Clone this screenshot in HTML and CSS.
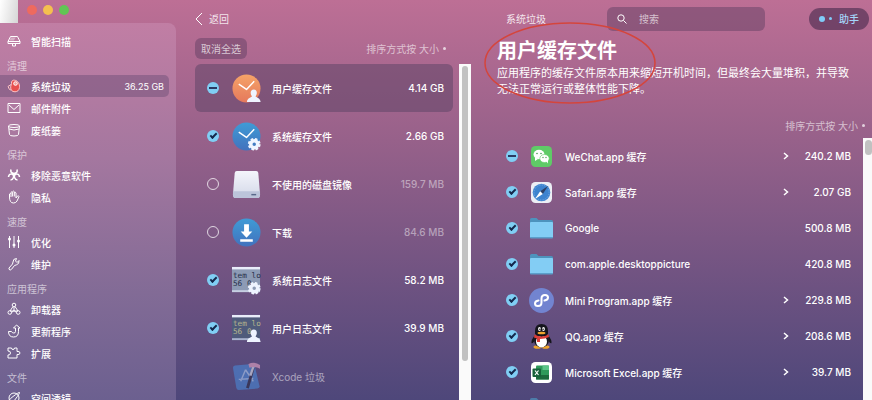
FILE: index.html
```html
<!DOCTYPE html>
<html lang="zh-CN">
<head>
  <meta charset="UTF-8">
  <title>系统垃圾</title>
  <link rel="stylesheet" href="styles.css">
</head>
<body>
  <!-- shared shapes -->
  <svg width="0" height="0" class="defs">
    <defs>
      <linearGradient id="orange" x1="0" y1="0" x2="0" y2="1"><stop offset="0" stop-color="#f5a468"/><stop offset="1" stop-color="#e5785c"/></linearGradient>
      <linearGradient id="blue" x1="0" y1="0" x2="0" y2="1"><stop offset="0" stop-color="#3f9bd6"/><stop offset="1" stop-color="#4272bd"/></linearGradient>
      <linearGradient id="disk" x1="0" y1="0" x2="0" y2="1"><stop offset="0" stop-color="#f4f5fb"/><stop offset="1" stop-color="#d3d8e8"/></linearGradient>
      <g id="person"><path d="M22.500 16c2 0 3.200 1.500 3.200 3.500 0 1.500-.6 2.600-1.300 3.500.2 1.400 4.800 1.200 5.200 6H15.400c.4-4.800 5-4.600 5.200-6-.7-.9-1.300-2-1.300-3.500 0-2 1.200-3.500 3.200-3.500z" fill="#eef4ff"/></g>
      <g id="gear"><circle cx="23" cy="23" r="3.600" fill="none" stroke="#eef4ff" stroke-width="3.600"/><circle cx="23" cy="23" r="5.500" fill="none" stroke="#eef4ff" stroke-width="2.200" stroke-dasharray="2.600 1.720"/></g>
      <g id="folder"><path d="M1 3.500Q1 2 2.500 2h5l2 2h13Q24 4 24 5.500V12H1z" fill="#4d93bd"/><rect x="1" y="6" width="23" height="16" rx="1" fill="#83cdf4"/><path d="M1 21h23v.5q0 1-1 1H2q-1 0-1-1z" fill="#5a9fcb"/></g>
    </defs>
  </svg>

  <div class="window">
    <aside class="sidebar">
      <div class="titlebar">
        <div class="lights">
          <span class="light red"></span>
          <span class="light yellow"></span>
          <span class="light green"></span>
        </div>
      </div>
      <nav class="menu">
        <a href="#" class="menu-item">
          <svg class="menu-icon" viewBox="0 0 14 14"><path d="M3.500 2.500h7l2.500 5v2H1v-2zM1 7.500h12M5.500 9.500v2.500h3V9.500" /><path d="M3.800 3.500h5l-2 3H2.500z" fill="#ffffff66" stroke="none"/></svg>
          <span>智能扫描</span>
        </a>
        <h2>清理</h2>
        <a href="#" class="menu-item active">
          <svg class="menu-icon" viewBox="0 0 14 14"><path d="M4.500 4.500C4 2 6 .8 7.500 1.200 11 1.500 12.800 5 12.500 8.500c-.2 2.600-2 4.300-4.500 4.300-3 0-4.500-1.800-4.300-5z" fill="#e8504f" stroke="#ffc3c4"/><circle cx="8.500" cy="4.500" r="1.800" fill="#f4a09b" stroke="#fff"/><path d="M4 5.500 1 7.500l1.500 3 1.500.5" stroke="#ffc3c4"/></svg>
          <span>系统垃圾</span>
          <span class="menu-size">36.25 GB</span>
        </a>
        <a href="#" class="menu-item">
          <svg class="menu-icon" viewBox="0 0 14 14"><path d="M1 2.500h12v9H1zM2 4l5 4.500L12 4"/></svg>
          <span>邮件附件</span>
        </a>
        <a href="#" class="menu-item">
          <svg class="menu-icon" viewBox="0 0 14 14"><ellipse cx="7" cy="3" rx="5.500" ry="1.500"/><path d="M1.500 3l1 8.500q.2 1.500 4.500 1.500t4.500-1.500l1-8.500M2 6q5 2 10 0"/></svg>
          <span>废纸篓</span>
        </a>
        <h2>保护</h2>
        <a href="#" class="menu-item">
          <svg class="menu-icon" viewBox="0 0 14 14"><path d="M4 1.500Q3 5 7 5.500 11 5 10 1.500M1.500 9Q2 5.500 5 6q2.500 1 1.500 3.500-1 2.500-3 2.500M12.500 9Q12 5.500 9 6 6.500 7 7.500 9.500q1 2.500 3 2.500" stroke-width="1.600"/></svg>
          <span>移除恶意软件</span>
        </a>
        <a href="#" class="menu-item">
          <svg class="menu-icon" viewBox="0 0 14 14"><path d="M2.500 7V4q1-1.500 1.500 0V2.500q1-1.500 1.600 0V1.700q1-1.200 1.700 0v1Q8.400 1.500 9 3v5l1.500-2q1.200-.7 1.500.6L10 11q-1 2-3.500 2-4 0-4-6M4 4v3M5.600 2.500v4M7.300 2.500v4"/></svg>
          <span>隐私</span>
        </a>
        <h2>速度</h2>
        <a href="#" class="menu-item">
          <svg class="menu-icon" viewBox="0 0 14 14"><path d="M2.500 1v12M7 1v12M11.500 1v12"/><g fill="#fff" stroke="none"><circle cx="2.500" cy="4" r="1.500"/><circle cx="7" cy="10" r="1.500"/><circle cx="11.500" cy="6" r="1.500"/></g></svg>
          <span>优化</span>
        </a>
        <a href="#" class="menu-item">
          <svg class="menu-icon" viewBox="0 0 14 14"><path d="M9.500 1.500Q6 1.500 6 5L5.500 7 2 11q-.5 1.500 1 2 1 0 1.500-.7L7.500 8.500l2-.7Q12.500 7 12 3.500l-2 2-1.500-1.500z"/></svg>
          <span>维护</span>
        </a>
        <h2>应用程序</h2>
        <a href="#" class="menu-item">
          <svg class="menu-icon" viewBox="0 0 14 14"><circle cx="7" cy="3" r="1.800"/><path d="M6 4.500 3 9h8L8 4.500M7 5v4"/><circle cx="2.800" cy="10.500" r="1.800"/><circle cx="11.200" cy="10.500" r="1.800"/><path d="M4.500 10.500 7 8.500l2.500 2"/></svg>
          <span>卸载器</span>
        </a>
        <a href="#" class="menu-item">
          <svg class="menu-icon" viewBox="0 0 14 14"><path d="M9.500 1 6.500 4H8.500v3.500Q8.500 9 6.800 9T4.500 7.500L1.500 7.500q0 5.500 5 5.500t5-5.500V4H13z"/></svg>
          <span>更新程序</span>
        </a>
        <a href="#" class="menu-item">
          <svg class="menu-icon" viewBox="0 0 14 14"><path d="M1 2h3.500q0 1.500 1.500 1.500T7.500 2H10v3.500q3-.5 3 1.500t-3 1.500V12H1V9q2.500.2 2.500-2T1 5z"/></svg>
          <span>扩展</span>
        </a>
        <h2>文件</h2>
        <a href="#" class="menu-item">
          <svg class="menu-icon" viewBox="0 0 14 14"><circle cx="7" cy="7" r="5"/><path d="M1.500 12.500Q0 10 6 5.500T12.500 1.500 8.500 8 1.500 12.500"/></svg>
          <span>空间透镜</span>
        </a>
      </nav>
    </aside>

    <section class="groups">
      <header class="groups-top">
        <button class="back">
          <svg width="8" height="14" viewBox="0 0 8 14"><path d="M7 1 1 7l6 6"/></svg>
          返回
        </button>
      </header>
      <div class="groups-tools">
        <button class="deselect">取消全选</button>
        <button class="sort">排序方式按 大小 <i></i></button>
      </div>
      <div class="scroll-area">
        <ul class="group-list">
          <li class="group selected">
            <input type="checkbox" id="g1" class="check partial">
            <svg class="group-icon" viewBox="0 0 30 30"><circle cx="15" cy="15" r="14.500" fill="url(#orange)"/><path d="M7 10.500 15 16l8-8.500" class="hand"/><use href="#person"/></svg>
            <label for="g1">用户缓存文件</label>
            <span class="size">4.14 GB</span>
          </li>
          <li class="group">
            <input type="checkbox" id="g2" class="check" checked>
            <svg class="group-icon" viewBox="0 0 30 30"><circle cx="15" cy="15" r="14.500" fill="url(#blue)"/><path d="M7 10.500 15 16l8-8.500" class="hand"/><use href="#gear"/></svg>
            <label for="g2">系统缓存文件</label>
            <span class="size">2.66 GB</span>
          </li>
          <li class="group off">
            <input type="checkbox" id="g3" class="check">
            <svg class="group-icon" viewBox="0 0 30 30"><path d="M5 1h20q2 0 2.200 2L29 25q0 4-3 4H4q-3 0-3-4L2.800 3Q3 1 5 1z" fill="url(#disk)"/><path d="M1 22h28v3q0 4-3 4H4q-3 0-3-4z" fill="#bcc4da"/><path d="M20 25.500h5" stroke="#59688a" stroke-width="1.500"/></svg>
            <label for="g3">不使用的磁盘镜像</label>
            <span class="size">159.7 MB</span>
          </li>
          <li class="group off">
            <input type="checkbox" id="g4" class="check">
            <svg class="group-icon" viewBox="0 0 30 30"><circle cx="15" cy="15" r="14.500" fill="url(#blue)"/><path d="M12.500 6.500h5V14H21l-6 6.500L9 14h3.500zM8.500 22h13v2.500h-13z" fill="#fff"/></svg>
            <label for="g4">下载</label>
            <span class="size">84.6 MB</span>
          </li>
          <li class="group">
            <input type="checkbox" id="g5" class="check" checked>
            <svg class="group-icon" viewBox="0 0 30 30"><path d="M0 1h29v26H0z" fill="#8d9bb5"/><path d="M0 1h29v2.500H0z" fill="#e9edfa"/><path d="M0 25h29v2H0z" fill="#c7cfe2"/><text x="1" y="12" class="log">tem lo</text><text x="1" y="21" class="log">56 0</text><use href="#gear"/></svg>
            <label for="g5">系统日志文件</label>
            <span class="size">58.2 MB</span>
          </li>
          <li class="group">
            <input type="checkbox" id="g6" class="check" checked>
            <svg class="group-icon" viewBox="0 0 30 30"><path d="M0 1h29v26H0z" fill="#4f5b7b"/><path d="M0 1h29v2.500H0z" fill="#e9edfa"/><path d="M0 25h29v2H0z" fill="#a9b3ce"/><text x="1" y="12" class="log light-log">tem lo</text><text x="1" y="21" class="log light-log">56 0</text><use href="#person"/></svg>
            <label for="g6">用户日志文件</label>
            <span class="size">39.9 MB</span>
          </li>
          <li class="group disabled">
            <span class="no-check"></span>
            <svg class="group-icon" viewBox="0 0 30 30"><path d="M1 6q0-2 2-2.300L21 2q2 0 2.500 2l5 21q0 2-2 2.500L7 29q-2 0-2.500-2z" fill="#4a83cf"/><path d="M14 8 9 20M14 8l8 12M7 18l15-1" stroke="#a9c8ef" stroke-width="1.500" fill="none"/><path d="M22 6 16 27" stroke="#2f2e49" stroke-width="3"/><path d="M22 5l-3 9" stroke="#d5d8e6" stroke-width="2.500"/><path d="M17 2q6-3 12 1v4q-5-3-11-1z" fill="#dd9fc0"/></svg>
            <span class="name">Xcode 垃圾</span>
          </li>
        </ul>
        <div class="scrollbar"><div class="thumb long"></div></div>
      </div>
    </section>

    <main class="detail">
      <header class="detail-top">
        <span class="crumb">系统垃圾</span>
        <div class="search">
          <svg width="10" height="10" viewBox="0 0 10 10"><circle cx="4" cy="4" r="3.200"/><path d="m6.500 6.500 3 3"/></svg>
          <input type="text" placeholder="搜索" aria-label="搜索">
        </div>
        <button class="assistant"><i class="big-dot"></i><i class="small-dot"></i>助手</button>
      </header>
      <div class="intro">
        <h1>用户缓存文件</h1>
        <p>应用程序的缓存文件原本用来缩短开机时间，但最终会大量堆积，并导致无法正常运行或整体性能下降。</p>
        <svg class="circle-mark" viewBox="0 0 174 84"><ellipse cx="87" cy="42" rx="85" ry="40"/></svg>
      </div>
      <div class="detail-tools">
        <button class="sort">排序方式按 大小 <i></i></button>
      </div>
      <div class="scroll-area">
        <ul class="file-list">
          <li class="file">
            <input type="checkbox" id="f1" class="check partial">
            <svg class="file-icon" viewBox="0 0 25 25"><rect x="2" y="2" width="21" height="21" rx="4.500" fill="#5fcb67"/><ellipse cx="10" cy="10.500" rx="5.500" ry="4.700" fill="#fff"/><path d="M6 13v4l3-2z" fill="#fff"/><ellipse cx="15.500" cy="14.500" rx="4.700" ry="4" fill="#fff" stroke="#5fcb67" stroke-width=".6"/><path d="m17 17 2 2.500V16z" fill="#fff"/><g fill="#4a9b55"><circle cx="8" cy="9.500" r=".8"/><circle cx="12" cy="9.500" r=".8"/><circle cx="14" cy="13.500" r=".7"/><circle cx="17" cy="13.500" r=".7"/></g></svg>
            <label for="f1">WeChat.app 缓存</label>
            <button class="expand" aria-label="展开"><svg width="6" height="8" viewBox="0 0 6 8"><path d="m1 1 3.500 3L1 7"/></svg></button>
            <span class="size">240.2 MB</span>
          </li>
          <li class="file">
            <input type="checkbox" id="f2" class="check" checked>
            <svg class="file-icon" viewBox="0 0 25 25"><rect x="2" y="2" width="21" height="21" rx="4.500" fill="#eceef5"/><circle cx="12.500" cy="12.500" r="8.800" fill="#3d83cf"/><circle cx="12.500" cy="12.500" r="7.500" fill="none" stroke="#a9cdf0" stroke-width=".7" stroke-dasharray=".6 1.200"/><path d="m19 6-5.200 8-2.600-2.800z" fill="#2d3f64"/><path d="m6 19 5.200-7.800 2.600 2.800z" fill="#fff"/></svg>
            <label for="f2">Safari.app 缓存</label>
            <button class="expand" aria-label="展开"><svg width="6" height="8" viewBox="0 0 6 8"><path d="m1 1 3.500 3L1 7"/></svg></button>
            <span class="size">2.07 GB</span>
          </li>
          <li class="file">
            <input type="checkbox" id="f3" class="check" checked>
            <svg class="file-icon" viewBox="0 0 25 25"><use href="#folder"/></svg>
            <label for="f3">Google</label>
            <span class="size">500.8 MB</span>
          </li>
          <li class="file">
            <input type="checkbox" id="f4" class="check" checked>
            <svg class="file-icon" viewBox="0 0 25 25"><use href="#folder"/></svg>
            <label for="f4">com.apple.desktoppicture</label>
            <span class="size">420.8 MB</span>
          </li>
          <li class="file">
            <input type="checkbox" id="f5" class="check" checked>
            <svg class="file-icon" viewBox="0 0 25 25"><circle cx="12.500" cy="12.500" r="12.500" fill="#7284d0"/><path d="M9.500 12.500q-3.500.5-3.500 3t3 2.500q3.500 0 3.500-3.500v-4Q12.500 7 16 7q3 0 3 2.500t-3.500 3" fill="none" stroke="#fff" stroke-width="2" stroke-linecap="round"/></svg>
            <label for="f5">Mini Program.app 缓存</label>
            <button class="expand" aria-label="展开"><svg width="6" height="8" viewBox="0 0 6 8"><path d="m1 1 3.500 3L1 7"/></svg></button>
            <span class="size">229.8 MB</span>
          </li>
          <li class="file">
            <input type="checkbox" id="f6" class="check" checked>
            <svg class="file-icon" viewBox="0 0 25 25"><path d="M6 11q-4 5-3.500 8 1 1 3-2zM19 11q4 5 3.500 8-1 1-3-2z" fill="#15151c"/><ellipse cx="8.500" cy="23" rx="4" ry="1.800" fill="#f0a52e"/><ellipse cx="16.500" cy="23" rx="4" ry="1.800" fill="#f0a52e"/><ellipse cx="12.500" cy="16" rx="7.500" ry="7.500" fill="#15151c"/><ellipse cx="12.500" cy="17.500" rx="5.500" ry="6" fill="#fff"/><path d="M6 10V7q0-7 6.500-7T19 7v3q-3 3-6.500 3T6 10z" fill="#15151c"/><ellipse cx="10.500" cy="5" rx="1.400" ry="2" fill="#fff"/><ellipse cx="14.500" cy="5" rx="1.400" ry="2" fill="#fff"/><circle cx="10.900" cy="5.200" r=".7"/><circle cx="14.100" cy="5.200" r=".7"/><ellipse cx="12.500" cy="9" rx="4" ry="1.300" fill="#f0a52e"/><path d="M5.500 10.500q7 4 14 0l.5 2.500q-4 2-9 2v3H8v-3.500l-3-1z" fill="#dc3d38"/></svg>
            <label for="f6">QQ.app 缓存</label>
            <button class="expand" aria-label="展开"><svg width="6" height="8" viewBox="0 0 6 8"><path d="m1 1 3.500 3L1 7"/></svg></button>
            <span class="size">208.6 MB</span>
          </li>
          <li class="file">
            <input type="checkbox" id="f7" class="check" checked>
            <svg class="file-icon" viewBox="0 0 25 25"><rect x="2" y="2" width="21" height="21" rx="4.500" fill="#fff"/><rect x="7" y="5.500" width="13" height="14" rx="1" fill="#2f9a5b"/><path d="M13.500 5.500H20V10h-6.500z" fill="#5bc487"/><path d="M7 15h13v4.500H7z" fill="#1c6a3d"/><rect x="3.500" y="8.500" width="8.500" height="8.500" rx="1" fill="#17613a"/><path d="m6 10.500 3.500 4.500M9.500 10.500 6 15" stroke="#fff" stroke-width="1.200"/></svg>
            <label for="f7">Microsoft Excel.app 缓存</label>
            <button class="expand" aria-label="展开"><svg width="6" height="8" viewBox="0 0 6 8"><path d="m1 1 3.500 3L1 7"/></svg></button>
            <span class="size">39.7 MB</span>
          </li>
          <li class="file">
            <span class="no-check"></span>
            <svg class="file-icon dim" viewBox="0 0 25 25"><use href="#folder"/></svg>
          </li>
        </ul>
        <div class="scrollbar narrow"><div class="thumb short"></div></div>
      </div>
    </main>
  </div>
</body>
</html>
```
FILE: styles.css
```css
* {
  box-sizing: border-box;
}

body {
  margin: 0;
  font-family: Inter, "Noto Sans CJK SC", sans-serif;
  font-size: 10px;
  color: #fff;
}

ul, h1, h2, p {
  margin: 0;
  padding: 0;
  list-style: none;
}

button {
  font: inherit;
  color: inherit;
  background: none;
  border: none;
  padding: 0;
  cursor: pointer;
}

svg {
  display: block;
  flex: none;
}

.defs {
  position: absolute;
}

.window {
  display: grid;
  grid-template-columns: 176px 295fr 401fr;
  height: 100vh;
  overflow: hidden;
  background: linear-gradient(#bd6f95 0%, #97618a 35%, #6d5281 72%, #4e477a 100%);
}

/* sidebar */
.sidebar {
  display: flex;
  flex-direction: column;
  min-height: 0;
}

.titlebar {
  flex: none;
  height: 23px;
  padding: 5px 0 0 27px;
  background: linear-gradient(100deg, #fff, #d5d5d5) no-repeat left / 18px 100%;
}

.lights {
  display: flex;
  gap: 6px;
}

.light {
  width: 10px;
  height: 10px;
  border-radius: 50%;
}

.red { background: #ee6a5f; }
.yellow { background: #f5bf4f; }
.green { background: #61c554; }

.menu {
  flex: 1;
  padding: 7px 7px 0 0;
  border-radius: 0 8px 0 0;
  background: linear-gradient(#c17ea4, #a4779f 35%, #826b96 70%, #6a5f8f);
}

.menu h2 {
  height: 23px;
  padding: 5px 0 0 7px;
  font-size: 10px;
  line-height: 18px;
  font-weight: 400;
  color: rgba(255, 255, 255, 0.6);
}

.menu-item {
  display: flex;
  align-items: center;
  gap: 10px;
  height: 22px;
  padding: 0 5px 0 7px;
  border-radius: 0 5px 5px 0;
  color: #fff;
  font-weight: 500;
  text-decoration: none;
}

.menu-item.active {
  background: rgba(96, 70, 110, 0.4);
}

.menu-icon {
  width: 14px;
  height: 14px;
  fill: none;
  stroke: #fff;
  stroke-width: 1;
  stroke-linejoin: round;
}

.menu-size {
  margin-left: auto;
  font-size: 9px;
  font-weight: 400;
}

/* group list */
.groups,
.detail {
  display: flex;
  flex-direction: column;
  min-width: 0;
  min-height: 0;
}

.groups-top {
  height: 37px;
  padding: 0 19px;
  display: flex;
  align-items: center;
}

.back {
  display: flex;
  align-items: center;
  gap: 6px;
  color: rgba(255, 255, 255, 0.85);
}

.back path,
.search path,
.search circle,
.expand path {
  fill: none;
  stroke: #fff;
}

.groups-tools {
  display: flex;
  justify-content: space-between;
  align-items: center;
  height: 27px;
  padding: 0 25px 4px 19px;
}

.deselect {
  height: 21px;
  padding: 0 6px;
  border-radius: 6px;
  background: rgba(90, 60, 95, 0.45);
  color: rgba(255, 255, 255, 0.7);
}

.sort {
  display: flex;
  align-items: center;
  gap: 4px;
  color: rgba(255, 255, 255, 0.6);
}

.sort i {
  width: 3px;
  height: 3px;
  border-radius: 50%;
  background: rgba(255, 255, 255, 0.7);
}

.scroll-area {
  flex: 1;
  display: flex;
  min-height: 0;
}

.group-list {
  flex: 1;
  padding: 0 6px 0 19px;
}

.group {
  display: flex;
  align-items: center;
  height: 48px;
  padding: 0 9px 0 12px;
  border-radius: 6px;
  font-weight: 500;
}

.group.selected {
  background: rgba(90, 65, 100, 0.5);
}

.group-icon {
  width: 29px;
  height: 29px;
  margin: 0 11px 0 13px;
}

.hand {
  fill: none;
  stroke: #fff;
  stroke-width: 1.5;
  stroke-linejoin: round;
}

.log {
  font: 8px "DejaVu Sans Mono", monospace;
  fill: #27304a;
}

.light-log {
  fill: #b5b38d;
}

.size {
  margin-left: auto;
}

.off .size {
  color: rgba(255, 255, 255, 0.45);
}

.disabled {
  font-weight: 400;
  color: rgba(255, 255, 255, 0.5);
}

.disabled .group-icon {
  opacity: 0.65;
}

.check {
  appearance: none;
  position: relative;
  flex: none;
  width: 12px;
  height: 12px;
  margin: 0;
  border: 1px solid rgba(255, 255, 255, 0.75);
  border-radius: 50%;
}

.check:checked,
.check.partial {
  border: none;
  background: #80cef4;
}

.check:checked::after {
  content: "";
  position: absolute;
  left: 3px;
  top: 3px;
  width: 7px;
  height: 4px;
  border: solid #14284c;
  border-width: 0 0 2px 2px;
  transform: rotate(-45deg);
}

.check.partial::after {
  content: "";
  position: absolute;
  left: 2px;
  top: 5px;
  width: 8px;
  height: 2px;
  background: #2a3a63;
}

/* pseudo-elements are not covered by the * rule */
.check::after {
  box-sizing: border-box;
}

.no-check {
  width: 12px;
}

/* scrollbars */
.scrollbar {
  flex: none;
  width: 12px;
  padding: 2px 3px;
  background: #fafafa;
}

.scrollbar.narrow {
  width: 9px;
  padding: 2px 0 0 2px;
}

.thumb {
  border-radius: 4px;
  background: #c1c1c1;
}

.long {
  height: 89%;
}

.short {
  height: 15px;
}

/* detail */
.detail-top {
  display: flex;
  align-items: center;
  flex: none;
  height: 37px;
  padding: 0 3px 0 35px;
}

.crumb {
  color: rgba(255, 255, 255, 0.85);
}

.search {
  display: flex;
  align-items: center;
  gap: 12px;
  width: 158px;
  height: 24px;
  margin: 0 auto 0 61px;
  padding: 0 10px;
  border-radius: 6px;
  background: rgba(90, 60, 95, 0.45);
}

.search input {
  flex: 1;
  min-width: 0;
  padding: 0;
  border: none;
  outline: none;
  background: none;
  font: inherit;
  color: #fff;
}

.search input::placeholder {
  color: rgba(255, 255, 255, 0.65);
}

.assistant {
  display: flex;
  align-items: center;
  gap: 4px;
  height: 22px;
  padding: 0 10px;
  border-radius: 11px;
  background: rgba(85, 50, 85, 0.7);
  color: #a5d6fa;
  font-weight: 500;
}

.big-dot,
.small-dot {
  border-radius: 50%;
  background: #80cbf8;
}

.big-dot {
  width: 6px;
  height: 6px;
}

.small-dot {
  width: 3px;
  height: 3px;
  margin-right: 3px;
}

.intro {
  position: relative;
  padding: 0 23px 0 26px;
}

.intro h1 {
  font-size: 20px;
  line-height: 28px;
  font-weight: 700;
}

.intro p {
  font-size: 11px;
  line-height: 16px;
}

/* hand-drawn mark round the title */
.circle-mark {
  position: absolute;
  left: 12px;
  top: -16px;
  width: 174px;
  height: 84px;
  fill: none;
  stroke: #d5453c;
  stroke-width: 1.5;
}

.detail-tools {
  display: flex;
  justify-content: flex-end;
  align-items: flex-end;
  height: 41px;
  padding: 0 7px 5px 0;
}

.file-list {
  flex: 1;
  padding-left: 35px;
}

.file {
  display: flex;
  align-items: center;
  height: 36px;
  padding-right: 12px;
  font-weight: 500;
}

.file-icon {
  width: 25px;
  height: 25px;
  margin: 0 11px;
}

.dim {
  opacity: 0.7;
}

.expand {
  margin-left: auto;
}

.expand path {
  stroke-width: 1.5;
}

.expand + .size {
  width: 62px;
  margin-left: 0;
  text-align: right;
}
```
